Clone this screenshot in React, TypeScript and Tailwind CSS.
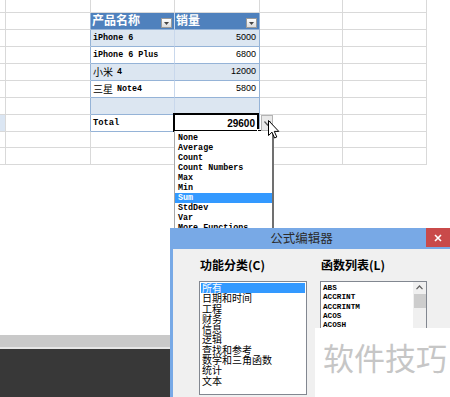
import React from "react";

const mono = "font-['Liberation_Mono','Noto_Sans_CJK_SC',monospace]";
const sans = "font-['Liberation_Sans',Arial,sans-serif]";
const cjk = "font-['Noto_Sans_CJK_SC','Liberation_Sans',sans-serif]";

function FilterBtn() {
  return (
    <span className="mb-[1px] mr-[2px] flex h-[10px] w-[11px] items-center justify-center border border-[#9a9a9a] bg-gradient-to-b from-white to-[#dcdcdc]">
      <svg width="5" height="3" viewBox="0 0 5 3">
        <path d="M0 0 L5 0 L2.5 3 Z" fill="#444" />
      </svg>
    </span>
  );
}

function HeaderCell({ text }: { text: string }) {
  return (
    <div className="flex h-full items-end justify-between">
      <span className={`${cjk} self-start pl-[1px] text-[12px] font-bold leading-[14px] text-white`}>
        {text}
      </span>
      <FilterBtn />
    </div>
  );
}

function NameCell({ zh, en }: { zh?: string; en: string }) {
  return (
    <div className="flex h-full items-center pl-[2px] text-black">
      {zh && <span className={`${cjk} mr-[4px] text-[10px] leading-none`}>{zh}</span>}
      <span className={`${mono} whitespace-pre text-[8.4px] font-bold leading-none`}>{en}</span>
    </div>
  );
}

function NumCell({ value }: { value: string }) {
  return (
    <div className={`${sans} flex h-full items-center justify-end pr-[3px] text-[9px] text-black`}>
      {value}
    </div>
  );
}

function cellClass(r: number, c: number) {
  const inTable = r >= 1 && r <= 7 && (c === 2 || c === 3);
  if (inTable) {
    const bg =
      r === 1 ? "bg-[#4f81bd]" : r % 2 === 0 ? "bg-[#dce6f1]" : "bg-white";
    const right = c === 2 ? "border-r-[#c9d8ec]" : "border-r-[#95b3d7]";
    return `relative border-r border-b border-b-[#95b3d7] ${right} ${bg}`;
  }
  if (c === 1 && r >= 1 && r <= 7) {
    return "border-r border-b border-r-[#95b3d7] border-b-[#d9d9d9] bg-white";
  }
  if (c === 0 && r === 7) {
    return "border-r border-b border-[#d9d9d9] bg-[#dbe6f3]";
  }
  return "border-r border-b border-[#d9d9d9] bg-white";
}

const names: Record<number, { zh?: string; en: string }> = {
  2: { en: "iPhone 6" },
  3: { en: "iPhone 6 Plus" },
  4: { zh: "小米", en: "4" },
  5: { zh: "三星", en: "Note4" },
};
const values: Record<number, string> = { 2: "5000", 3: "6800", 4: "12000", 5: "5800" };

function cellContent(r: number, c: number) {
  if (r === 1 && c === 2) return <HeaderCell text="产品名称" />;
  if (r === 1 && c === 3) return <HeaderCell text="销量" />;
  if (c === 2 && names[r]) return <NameCell {...names[r]} />;
  if (c === 3 && values[r]) return <NumCell value={values[r]} />;
  if (r === 7 && c === 2) {
    return (
      <div className={`${mono} flex h-full items-center pl-[2px] text-[8.8px] font-bold leading-none text-black`}>
        Total
      </div>
    );
  }
  if (r === 7 && c === 3) {
    return (
      <>
        <div className={`${sans} flex h-full items-center justify-end pr-[4px] text-[10px] font-bold text-black`}>
          29600
        </div>
        <div className="absolute -left-[2px] -top-[2px] h-[19px] w-[86px] border-2 border-black" />
        <div className="absolute -bottom-[3px] -right-[3px] h-[5px] w-[5px] border border-white bg-black" />
      </>
    );
  }
  return null;
}

function Sheet() {
  const rows = [0, 1, 2, 3, 4, 5, 6, 7, 8, 9];
  const cols = [0, 1, 2, 3, 4, 5];
  return (
    <div className="grid w-[427px] grid-cols-[6px_85px_84px_85px_83px_84px] grid-rows-[13px_17px_17px_17px_17px_17px_17px_17px_16px_17px]">
      {rows.map((r) =>
        cols.map((c) => (
          <div key={`${r}-${c}`} className={cellClass(r, c)}>
            {cellContent(r, c)}
          </div>
        ))
      )}
    </div>
  );
}

const aggItems = [
  "None",
  "Average",
  "Count",
  "Count Numbers",
  "Max",
  "Min",
  "Sum",
  "StdDev",
  "Var",
  "More Functions...",
];

const categories = [
  "所有",
  "日期和时间",
  "工程",
  "财务",
  "信息",
  "逻辑",
  "查找和参考",
  "数学和三角函数",
  "统计",
  "文本",
];

const functions = ["ABS", "ACCRINT", "ACCRINTM", "ACOS", "ACOSH"];

export default function App() {
  return (
    <div className="relative h-[397px] w-[450px] overflow-hidden bg-white">
      <div className="flex h-full flex-col">
        <Sheet />
        <div className="flex-1 bg-white" />
        <div className="h-[12px] bg-[#c9c9c9]" />
        <div className="h-[2px] bg-[#e6e6e6]" />
        <div className="h-[48px] bg-[#383838]" />
      </div>

      {/* total dropdown button */}
      <div className="absolute left-[261px] top-[115px] flex h-[16px] w-[12px] items-center justify-center border border-[#b4b4b4] bg-[#e9e9e9]">
        <svg width="7" height="5" viewBox="0 0 7 5">
          <path d="M0.5 0.5 L3.5 4 L6.5 0.5" fill="none" stroke="#555" strokeWidth="1.2" />
        </svg>
      </div>

      {/* aggregate list */}
      <div className="absolute left-[174px] top-[131px] h-[97px] w-[100px] overflow-hidden border-l border-r-2 border-l-[#a8a8a8] border-r-[#707070] bg-white pt-[2px]">
        {aggItems.map((it) => (
          <div
            key={it}
            className={`${mono} h-[10px] whitespace-pre pl-[3px] text-[8.4px] font-bold leading-[10px] ${
              it === "Sum" ? "bg-[#3399ff] text-white" : "text-black"
            }`}
          >
            {it}
          </div>
        ))}
      </div>

      {/* mouse cursor */}
      <svg className="absolute left-[268px] top-[120px]" width="12" height="19" viewBox="0 0 12 19">
        <path d="M0.5 0.5 L0.5 15.5 L4 12.2 L6.6 18 L8.8 17 L6.3 11.4 L10.8 11.4 Z" fill="white" stroke="black" strokeWidth="1" />
      </svg>

      {/* formula editor dialog */}
      <div className="absolute left-[170px] top-[228px] flex h-[169px] w-[280px] flex-col bg-[#78a9e6] pl-[3px]">
        <div className="flex h-[21px] items-center">
          <div className={`${cjk} flex-1 pl-[4px] text-center text-[12.5px] leading-none text-[#2b2b2b]`}>
            公式编辑器
          </div>
          <div className="flex h-[19px] w-[24px] items-center justify-center self-start bg-[#c94a4a]">
            <svg width="8" height="8" viewBox="0 0 8 8">
              <path d="M1 1 L7 7 M7 1 L1 7" stroke="white" strokeWidth="1.6" />
            </svg>
          </div>
        </div>
        <div className="flex flex-1 gap-[13px] bg-[#f0f0f0] pl-[26px] pt-[8px]">
          <div className="flex w-[108px] flex-col">
            <div className={`${cjk} pl-[1px] text-[12px] font-bold leading-[16px] text-black`}>功能分类(C)</div>
            <div className="mt-[8px] h-[114px] overflow-hidden border border-[#828790] bg-white pl-[1px] pr-[1px] pt-[1px]">
              {categories.map((c, i) => (
                <div
                  key={c}
                  className={`${cjk} h-[10.3px] whitespace-nowrap pl-[1px] text-[10px] leading-[10.3px] ${
                    i === 0 ? "bg-[#3399ff] text-white" : "text-black"
                  }`}
                >
                  {c}
                </div>
              ))}
            </div>
          </div>
          <div className="flex w-[107px] flex-col">
            <div className={`${cjk} pl-[1px] text-[12px] font-bold leading-[16px] text-black`}>函数列表(L)</div>
            <div className="mt-[8px] flex h-[114px] border border-[#828790] bg-white">
              <div className="flex-1 pl-[2px] pt-[2px]">
                {functions.map((f) => (
                  <div key={f} className={`${mono} h-[9.3px] text-[7.7px] font-bold leading-[9.3px] text-black`}>
                    {f}
                  </div>
                ))}
              </div>
              <div className="flex w-[13px] flex-col items-center bg-[#f0f0f0] pt-[3px]">
                <svg width="7" height="5" viewBox="0 0 7 5">
                  <path d="M0.5 4.2 L3.5 1 L6.5 4.2" fill="none" stroke="#606060" strokeWidth="1.2" />
                </svg>
                <div className="mt-[4px] h-[14px] w-[12px] bg-[#cdcdcd]" />
              </div>
            </div>
          </div>
        </div>
      </div>

      {/* watermark */}
      <div className="absolute bottom-0 left-[315px] right-0 top-[328px] bg-white pl-[8px] pt-[13px]">
        <span className={`${cjk} whitespace-nowrap text-[31px] leading-[31px] text-[#c6c6c6]`}>软件技巧</span>
      </div>
    </div>
  );
}
